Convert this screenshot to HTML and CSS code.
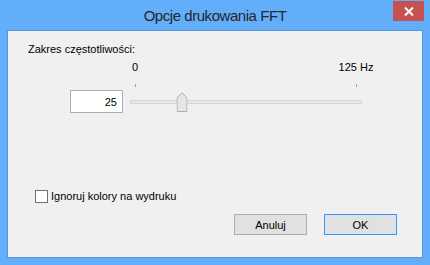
FILE: index.html
```html
<!DOCTYPE html>
<html lang="pl">
<head>
<meta charset="utf-8">
<link rel="stylesheet" href="styles.css">
</head>
<body>
<div class="window">
  <div class="titlebar">
    <span class="title">Opcje drukowania FFT</span>
    <button class="close" aria-label="Zamknij">
      <svg width="10" height="9" viewBox="0 0 10 9"><path d="M1 0.5 L9 8.5 M9 0.5 L1 8.5" stroke="#fff" stroke-width="2"/></svg>
    </button>
  </div>
  <div class="client">
    <div class="label">Zakres częstotliwości:</div>
    <div class="range-row">
      <input class="value" type="text" value="25">
      <div class="slider">
        <div class="scale">
          <span class="mark mark-min">0</span>
          <span class="mark mark-max">125 Hz</span>
          <span class="tick tick-min"></span>
          <span class="tick tick-max"></span>
        </div>
        <div class="track">
          <svg class="thumb" style="left:20%" width="11" height="20" viewBox="0 0 11 20">
            <path d="M0.5 19.5 L0.5 6 L5.5 0.7 L10.5 6 L10.5 19.5 Z" fill="#e6e6e6" stroke="#adadad"/>
          </svg>
        </div>
      </div>
    </div>
    <label class="check">
      <span class="box"></span>
      <span>Ignoruj kolory na wydruku</span>
    </label>
    <div class="buttons">
      <button class="btn">Anuluj</button>
      <button class="btn btn-default">OK</button>
    </div>
  </div>
</div>
</body>
</html>
```

FILE: styles.css
```css
* { box-sizing: border-box; }
html, body { margin: 0; padding: 0; }
body {
  width: 430px;
  height: 265px;
  overflow: hidden;
  font-family: "Liberation Sans", Arial, sans-serif;
  font-size: 11px;
  color: #000;
}
.window {
  width: 430px;
  height: 265px;
  background: #63aefa;
  padding: 0 7px 7px 7px;
  display: flex;
  flex-direction: column;
}
.titlebar {
  position: relative;
  height: 30px;
  flex: none;
  display: flex;
  justify-content: center;
  align-items: center;
}
.title {
  font-size: 15px;
  letter-spacing: -0.45px;
  color: #262626;
  margin-top: 1px;
}
.close {
  position: absolute;
  top: 1px;
  right: -1px;
  width: 31px;
  height: 20px;
  border: 0;
  padding: 0;
  background: #c75050;
  display: flex;
  align-items: center;
  justify-content: center;
}
.client {
  flex: 1;
  background: #f0f0f0;
  border: 1px solid #5597da;
  padding: 11px 25px 0 20px;
  display: flex;
  flex-direction: column;
}
.label {
  line-height: 14px;
}
.range-row {
  display: flex;
  align-items: flex-end;
  margin-top: 4px;
  margin-left: 42px;
}
.value {
  width: 53px;
  height: 23px;
  border: 1px solid #abadb3;
  background: #fff;
  text-align: right;
  font: inherit;
  font-size: 11px;
  padding: 0 5px 0 0;
  margin: 0;
  outline: none;
}
.slider {
  width: 232px;
  margin-left: 7px;
  padding: 0 6px 0 5px;
}
.scale {
  position: relative;
  height: 30px;
}
.mark {
  position: absolute;
  top: 0;
  line-height: 14px;
  transform: translateX(-50%);
  white-space: nowrap;
}
.mark-min { left: 0; }
.mark-max { left: 100%; }
.tick {
  position: absolute;
  top: 24px;
  width: 1px;
  height: 3px;
  background: #9f9f9f;
}
.tick-min { left: 0; }
.tick-max { left: 100%; }
.track {
  position: relative;
  height: 4px;
  margin: 10px -6px 9px -5px;
  border: 1px solid #d6d6d6;
  background: #e7e7e7;
}
.thumb {
  position: absolute;
  top: -9px;
  margin-left: -0.5px;
  transform: translateX(-0.5px);
  display: block;
}
.track .thumb { left: 20%; }
.check {
  display: flex;
  align-items: center;
  margin-top: 76px;
  margin-left: 7px;
  line-height: 14px;
}
.box {
  width: 13px;
  height: 13px;
  border: 1px solid #707070;
  background: #fff;
  margin-right: 3px;
}
.buttons {
  display: flex;
  justify-content: flex-end;
  gap: 17px;
  margin-top: 11px;
}
.btn {
  width: 73px;
  height: 21px;
  border: 1px solid #adadad;
  background: #e1e1e1;
  font: inherit;
  color: #000;
  padding: 0;
}
.btn-default {
  border-color: #3399ff;
}
```
